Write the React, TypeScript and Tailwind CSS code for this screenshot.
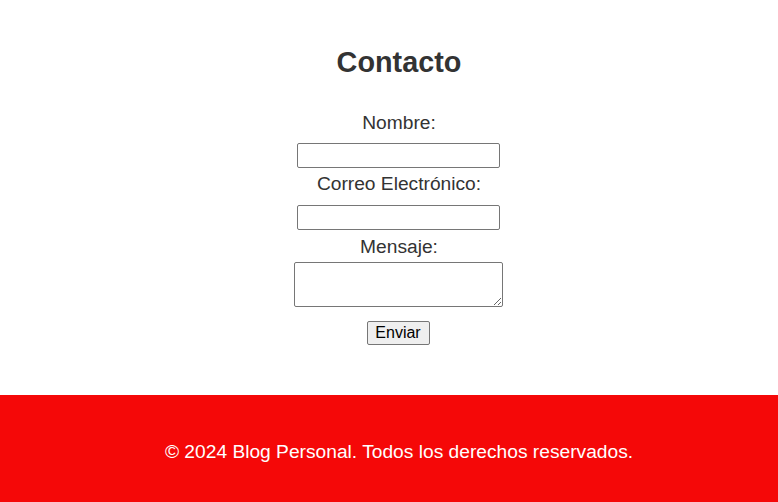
import React from 'react'

const App: React.FC = () => {
  return (
    <div className="min-h-[502px] bg-white font-['Liberation_Sans',Arial,sans-serif] text-[#333]">
      <main className="flex flex-col items-center pl-[20px] pt-[46px] h-[395px]">
        <h2 className="text-[28.8px] font-bold leading-[33px]">Contacto</h2>
        <form className="flex flex-col items-center mt-[33px]" onSubmit={e => e.preventDefault()}>
          <label htmlFor="nombre" className="text-[19.2px] leading-[22px]">Nombre:</label>
          <input
            id="nombre"
            type="text"
            className="mt-[9px] -ml-[2px] w-[203px] h-[25px] border border-[#767676] rounded-[2px] bg-white"
          />
          <label htmlFor="correo" className="mt-[5px] text-[19.2px] leading-[22px]">Correo Electrónico:</label>
          <input
            id="correo"
            type="email"
            className="mt-[10px] -ml-[2px] w-[203px] h-[25px] border border-[#767676] rounded-[2px] bg-white"
          />
          <label htmlFor="mensaje" className="mt-[6px] text-[19.2px] leading-[22px]">Mensaje:</label>
          <textarea
            id="mensaje"
            className="mt-[4px] -ml-[2px] w-[209px] h-[45px] border border-[#767676] rounded-[2px] bg-white"
          />
          <button
            type="submit"
            className="mt-[14px] -ml-[2px] w-[63px] h-[24px] text-[16px] leading-[18px] text-black bg-[#efefef] border border-[#767676] rounded-[2px]"
          >
            Enviar
          </button>
        </form>
      </main>
      <footer className="h-[107px] bg-[#f50808] text-white pl-[20px] pt-[46px] text-center">
        <p className="text-[19.2px] leading-[22px]">© 2024 Blog Personal. Todos los derechos reservados.</p>
      </footer>
    </div>
  )
}

export default App
